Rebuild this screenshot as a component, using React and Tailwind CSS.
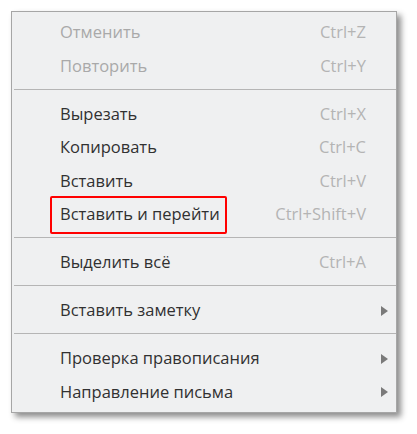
import React from "react";

const Arrow = () => (
  <svg width="7" height="10" viewBox="0 0 7 10" className="block">
    <path d="M0 0 L7 5 L0 10 Z" fill="#7a7a7a" />
  </svg>
);

function Row({ label, shortcut, disabled, sub, highlight }) {
  return (
    <div className="relative flex items-center h-[33.5px] pl-[48px] pr-[8px]">
      <span className={disabled ? "text-[#a9a9a9]" : "text-[#313131]"}>{label}</span>
      <span className="flex-1" />
      {shortcut && <span className="text-[#b4b4b4] mr-[22px]">{shortcut}</span>}
      {sub && <Arrow />}
      {highlight && (
        <div className="absolute left-[38px] top-[-2px] w-[177px] h-[38px] border-2 border-[#ff0000] rounded-[2px]" />
      )}
    </div>
  );
}

const Sep = () => (
  <div className="pt-[5.5px] pb-[8px]">
    <div className="ml-[2px] h-px bg-[#b5b5b5]" />
  </div>
);

export default function App() {
  return (
    <div className="w-[417px] h-[434px] bg-white pt-[11px] pl-[11px]" style={{ fontFamily: '"Open Sans", sans-serif' }}>
      <div className="w-[386px] border border-[#a6a6a6] bg-[#eff0f1] pt-[4px] pb-[3px] text-[16.5px] shadow-[4px_4px_6px_rgba(0,0,0,0.45)]">
        <Row label="Отменить" shortcut="Ctrl+Z" disabled />
        <Row label="Повторить" shortcut="Ctrl+Y" disabled />
        <Sep />
        <Row label="Вырезать" shortcut="Ctrl+X" />
        <Row label="Копировать" shortcut="Ctrl+C" />
        <Row label="Вставить" shortcut="Ctrl+V" />
        <Row label="Вставить и перейти" shortcut="Ctrl+Shift+V" highlight />
        <Sep />
        <Row label="Выделить всё" shortcut="Ctrl+A" />
        <Sep />
        <Row label="Вставить заметку" sub />
        <Sep />
        <Row label="Проверка правописания" sub />
        <Row label="Направление письма" sub />
      </div>
    </div>
  );
}
